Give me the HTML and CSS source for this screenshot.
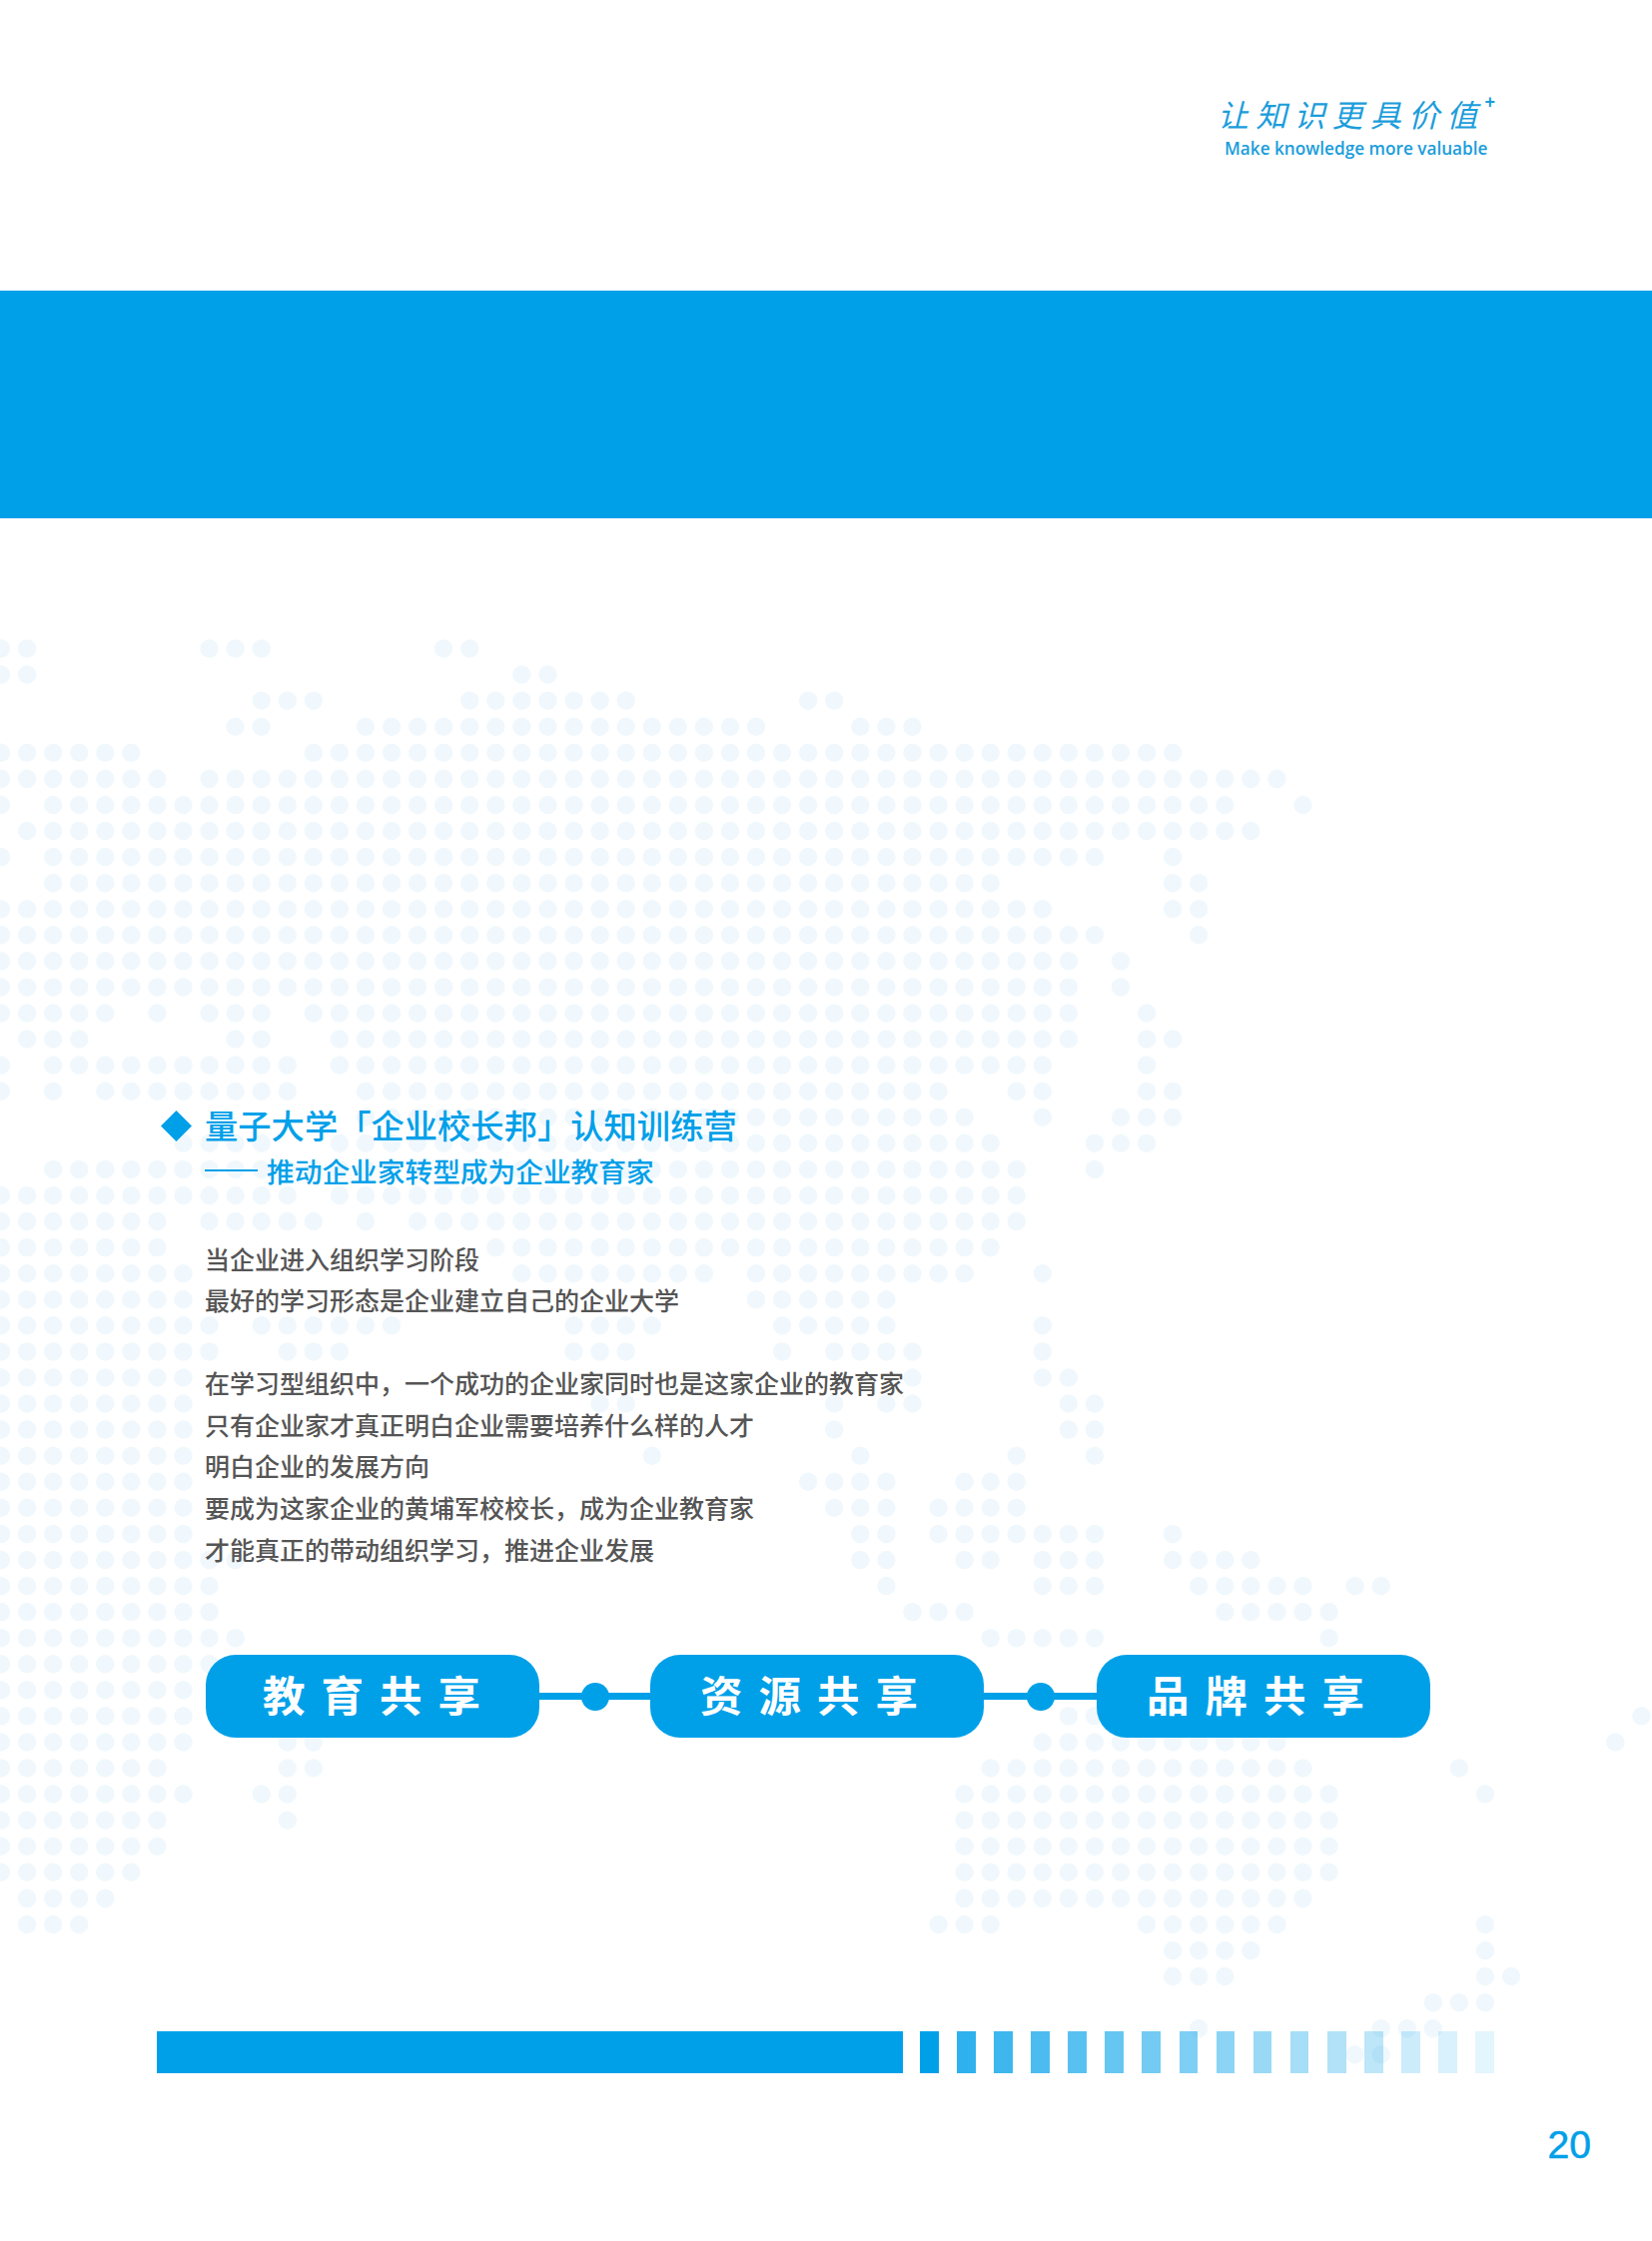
FILE: index.html
```html
<!DOCTYPE html>
<html lang="zh-CN">
<head>
<meta charset="utf-8">
<title>量子大学「企业校长邦」认知训练营</title>
<link rel="stylesheet" href="styles.css">
</head>
<body>
<div class="page">
  <svg class="map" width="1654" height="2244" viewBox="0 0 1654 2244" aria-hidden="true">
    <g transform="translate(1 649.5) scale(26.07)">
      <path class="map-dots" d="M0 0H1.01M8 0H10.01M17 0H18.01M0 1H1.01M20 1H21.01M10 2H12.01M18 2H24.01M31 2H32.01M9 3H10.01M14 3H29.01M33 3H35.01M0 4H5.01M12 4H45.01M0 5H6.01M8 5H49.01M0 6h.01M2 6H47.01M50 6h.01M1 7H48.01M0 8h.01M2 8H42.01M45 8h.01M2 9H38.01M45 9H46.01M0 10H40.01M45 10H46.01M0 11H42.01M46 11h.01M0 12H41.01M43 12h.01M0 13H41.01M43 13h.01M0 14H4.01M6 14h.01M8 14H10.01M12 14H41.01M44 14h.01M1 15H3.01M9 15H10.01M13 15H41.01M44 15H45.01M0 16h.01M2 16H11.01M13 16H40.01M44 16h.01M0 17h.01M2 17h.01M4 17H11.01M14 17H36.01M39 17H40.01M44 17H45.01M14 18H37.01M40 18h.01M43 18H45.01M7 19H10.01M13 19H38.01M42 19H44.01M2 20H39.01M42 20h.01M0 21H11.01M13 21H39.01M0 22H6.01M8 22H12.01M14 22h.01M16 22H39.01M0 23H6.01M19 23H38.01M0 24H7.01M20 24H27.01M29 24H37.01M40 24h.01M0 25H7.01M29 25H34.01M0 26H8.01M10 26H15.01M22 26H25.01M30 26H34.01M40 26h.01M0 27H8.01M11 27H13.01M22 27H24.01M30 27h.01M32 27H35.01M40 27h.01M0 28H7.01M35 28h.01M40 28H41.01M0 29H7.01M23 29H24.01M32 29h.01M34 29H35.01M41 29H42.01M0 30H7.01M32 30h.01M41 30H42.01M0 31H7.01M25 31h.01M33 31h.01M39 31h.01M42 31h.01M0 32H7.01M31 32H34.01M37 32H39.01M0 33H7.01M32 33H34.01M36 33H39.01M0 34H7.01M33 34H34.01M36 34H42.01M45 34h.01M0 35H9.01M33 35H34.01M37 35H38.01M40 35H42.01M45 35H48.01M0 36H8.01M34 36h.01M40 36H42.01M46 36H50.01M52 36H53.01M0 37H8.01M35 37H37.01M47 37H51.01M0 38H9.01M38 38H42.01M51 38h.01M0 39H8.01M0 40H7.01M0 41H7.01M41 41H42.01M63 41h.01M0 42H7.01M11 42H12.01M40 42H49.01M62 42h.01M0 43H6.01M11 43H12.01M38 43H50.01M56 43h.01M0 44H7.01M10 44H11.01M37 44H51.01M57 44h.01M0 45H6.01M11 45h.01M37 45H51.01M0 46H6.01M37 46H51.01M0 47H5.01M37 47H51.01M1 48H4.01M37 48H50.01M1 49H3.01M36 49H38.01M44 49H49.01M57 49h.01M45 50H48.01M57 50h.01M45 51H47.01M57 51H58.01M55 52H57.01M46 53h.01M53 53H55.01M52 54H53.01"/>
    </g>
  </svg>

  <header class="head">
    <div class="logo">
      <div class="logo-cn">让知识更具价值<span class="logo-plus">+</span></div>
      <div class="logo-en">Make knowledge more valuable</div>
    </div>
  </header>

  <div class="band"></div>

  <main class="main">
    <section class="intro">
      <h1 class="title"><span class="diamond"></span>量子大学「企业校长邦」认知训练营</h1>
      <h2 class="subtitle"><span class="rule"></span>推动企业家转型成为企业教育家</h2>
      <div class="copy">
        <p>当企业进入组织学习阶段<br>最好的学习形态是企业建立自己的企业大学</p>
        <p>在学习型组织中，一个成功的企业家同时也是这家企业的教育家<br>只有企业家才真正明白企业需要培养什么样的人才<br>明白企业的发展方向<br>要成为这家企业的黄埔军校校长，成为企业教育家<br>才能真正的带动组织学习，推进企业发展</p>
      </div>
    </section>

    <div class="flow">
      <div class="pill pill-first">教育共享</div>
      <div class="link"><span class="node"></span></div>
      <div class="pill">资源共享</div>
      <div class="link link-wide"><span class="node"></span></div>
      <div class="pill">品牌共享</div>
    </div>

    <div class="strip">
      <div class="strip-solid"></div>
      <div class="strip-bars">
        <span></span><span></span><span></span><span></span>
        <span></span><span></span><span></span><span></span>
        <span></span><span></span><span></span><span></span>
        <span></span><span></span><span></span><span></span>
      </div>
    </div>

    <div class="folio">20</div>
  </main>
</div>
</body>
</html>
```
FILE: styles.css
```css
* { box-sizing: border-box; }
html, body { margin: 0; padding: 0; background: #fff; }
.page {
  position: relative;
  width: 1654px;
  height: 2244px;
  overflow: hidden;
  font-family: "Noto Sans CJK SC", "Noto Sans", sans-serif;
}
.map { position: absolute; top: 0; left: 0; filter: blur(.5px); }
.map-dots {
  fill: none;
  stroke: #f0f8fd;
  stroke-width: .71;
  stroke-linecap: round;
  stroke-dasharray: 0 1;
}
.head {
  position: relative;
  height: 291px;
  display: flex;
  justify-content: flex-end;
  padding: 92px 167px 0 0;
}
.logo { width: 272px; color: #1b9ddb; }
.logo-cn {
  font-size: 31px;
  line-height: 44px;
  letter-spacing: 7.2px;
  font-style: italic;
  font-weight: 400;
  white-space: nowrap;
  padding-left: 4px;
}
.logo-plus {
  font-family: "Liberation Sans", sans-serif;
  font-size: 18px;
  font-weight: 700;
  font-style: normal;
  letter-spacing: 0;
  line-height: 0;
  vertical-align: 19px;
}
.logo-en {
  font-family: "Open Sans", sans-serif;
  font-size: 17.2px;
  font-weight: 600;
  line-height: 22px;
  white-space: nowrap;
  margin-top: 2px;
  padding-left: 11px;
}
.band { position: relative; height: 228px; background: #00a0e9; }
.main { position: relative; padding-top: 585px; }
.intro { padding-left: 205px; }
.title {
  position: relative;
  margin: 0;
  font-size: 33.3px;
  line-height: 44px;
  font-weight: 500;
  color: #00a0e9;
  white-space: nowrap;
}
.diamond {
  position: absolute;
  left: -44px;
  top: 8px;
  width: 31px;
  height: 31px;
  background: #00a0e9;
  clip-path: polygon(50% 0, 100% 50%, 50% 100%, 0 50%);
}
.subtitle {
  display: flex;
  align-items: center;
  gap: 9px;
  margin: 4px 0 0;
  font-size: 27.7px;
  line-height: 40px;
  font-weight: 500;
  color: #00a0e9;
  white-space: nowrap;
}
.rule { width: 53px; height: 1.5px; background: #00a0e9; }
.copy {
  margin-top: 47.5px;
  font-size: 25px;
  font-weight: 500;
  line-height: 41.6px;
  color: #555;
  white-space: nowrap;
}
.copy p { margin: 0 0 41.6px; }
.copy p:last-child { margin-bottom: 0; }
.flow {
  display: flex;
  align-items: center;
  margin: 85px 0 0 206px;
}
.pill {
  width: 334px;
  height: 83px;
  border-radius: 30px;
  background: #00a0e9;
  color: #fff;
  font-size: 42.5px;
  font-weight: 700;
  line-height: 77px;
  letter-spacing: 16px;
  text-align: center;
  white-space: nowrap;
}
.pill-first { text-indent: 14px; }
.link {
  position: relative;
  width: 111px;
  height: 7px;
  background: #00a0e9;
}
.link-wide { width: 113px; }
.node {
  position: absolute;
  left: 50%;
  top: 50%;
  width: 28px;
  height: 28px;
  margin: -14px 0 0 -14px;
  border-radius: 50%;
  background: #00a0e9;
}
.strip {
  display: flex;
  gap: 17px;
  height: 42px;
  margin: 294px 0 0 157px;
}
.strip-solid { width: 747px; background: #00a0e9; }
.strip-bars { display: flex; gap: 18.4px; }
.strip-bars span { width: 18.7px; background: #00a0e9; }
.strip-bars span:nth-child(1) { opacity: 1; }
.strip-bars span:nth-child(2) { opacity: .82; }
.strip-bars span:nth-child(3) { opacity: .76; }
.strip-bars span:nth-child(4) { opacity: .7; }
.strip-bars span:nth-child(5) { opacity: .65; }
.strip-bars span:nth-child(6) { opacity: .6; }
.strip-bars span:nth-child(7) { opacity: .55; }
.strip-bars span:nth-child(8) { opacity: .5; }
.strip-bars span:nth-child(9) { opacity: .45; }
.strip-bars span:nth-child(10) { opacity: .4; }
.strip-bars span:nth-child(11) { opacity: .35; }
.strip-bars span:nth-child(12) { opacity: .3; }
.strip-bars span:nth-child(13) { opacity: .26; }
.strip-bars span:nth-child(14) { opacity: .2; }
.strip-bars span:nth-child(15) { opacity: .15; }
.strip-bars span:nth-child(16) { opacity: .11; }
.folio {
  margin: 48px 61px 0 0;
  text-align: right;
  font-family: "Liberation Sans", sans-serif;
  font-size: 39px;
  line-height: 48px;
  color: #00a0e9;
  -webkit-text-stroke: .6px #00a0e9;
}
```
